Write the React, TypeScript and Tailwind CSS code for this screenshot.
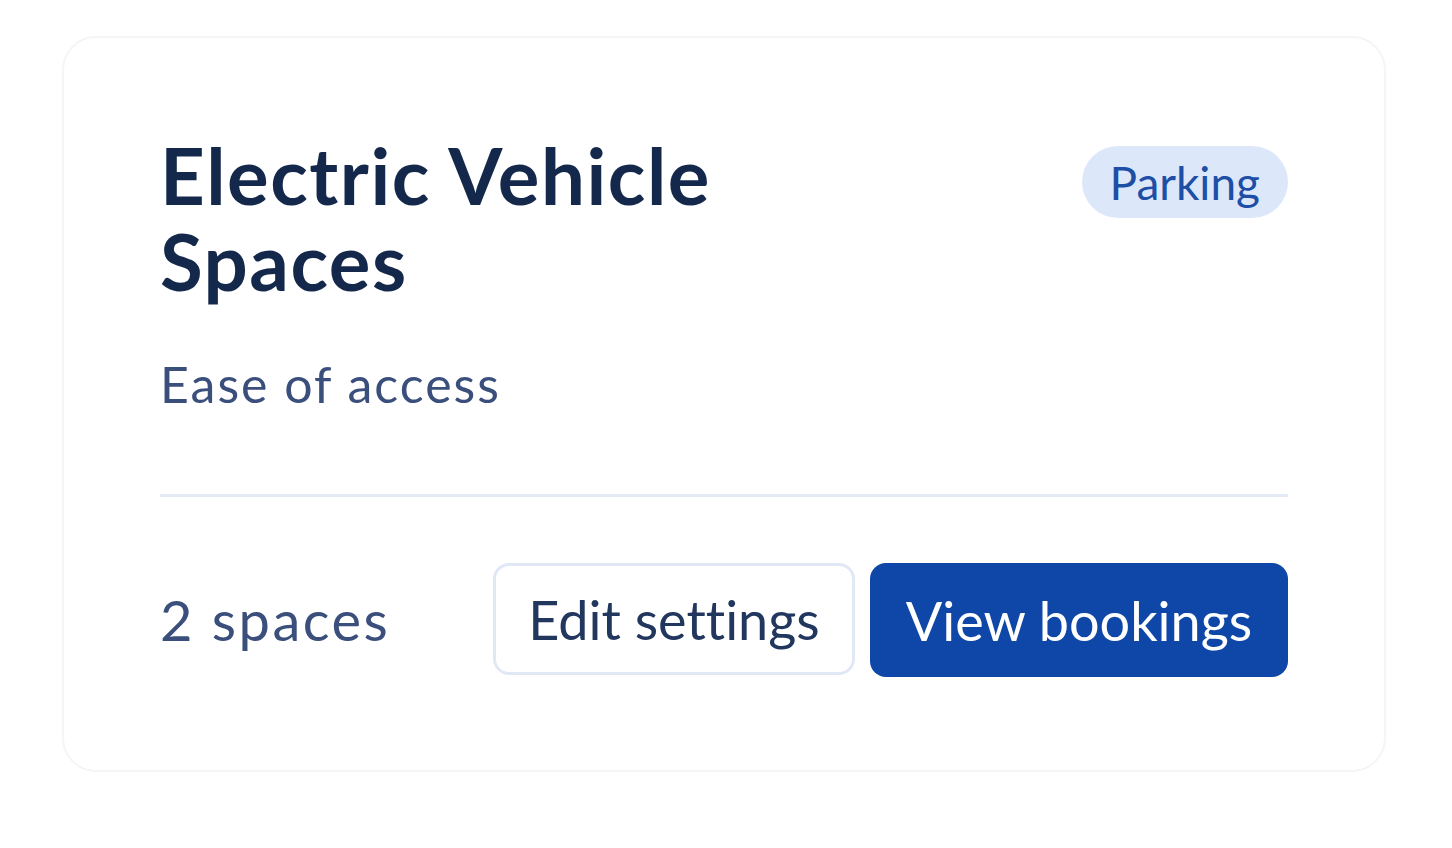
export default function App() {
  return (
    <main className="min-h-screen bg-white pt-[36px] pl-[62px] font-['Lato',sans-serif] [font-variant-ligatures:none]">
      <div className="w-[1324px] h-[736px] rounded-[34px] border-2 border-[#f4f5f7] bg-white px-[96px] pt-[94px]">
        {/* header */}
        <div className="flex items-start justify-between">
          <h2 className="w-[640px] text-[78px] leading-[86px] font-bold tracking-[1.5px] text-[#14284b]">
            Electric Vehicle Spaces
          </h2>
          <span className="mt-[14px] rounded-full bg-[#dce8fa] px-[28px] h-[72px] flex items-center text-[46px] text-[#1d4fa6]">
            Parking
          </span>
        </div>

        <p className="mt-[50px] text-[50px] leading-[60px] tracking-[2px] text-[#3b4f7c]">
          Ease of access
        </p>

        <div className="mt-[80px] border-t-[3px] border-[#e4ebf7]" />

        {/* footer */}
        <div className="mt-[66px] flex items-center justify-between">
          <span className="text-[56px] tracking-[2.5px] text-[#3b4f7c]">2 spaces</span>
          <div className="flex gap-[15px]">
            <button className="h-[112px] w-[362px] rounded-[16px] border-[3px] border-[#e0e8f5] bg-white text-[54px] text-[#22375e]">
              Edit settings
            </button>
            <button className="h-[114px] w-[418px] rounded-[16px] bg-[#0e47a8] text-[54px] text-white">
              View bookings
            </button>
          </div>
        </div>
      </div>
    </main>
  );
}
